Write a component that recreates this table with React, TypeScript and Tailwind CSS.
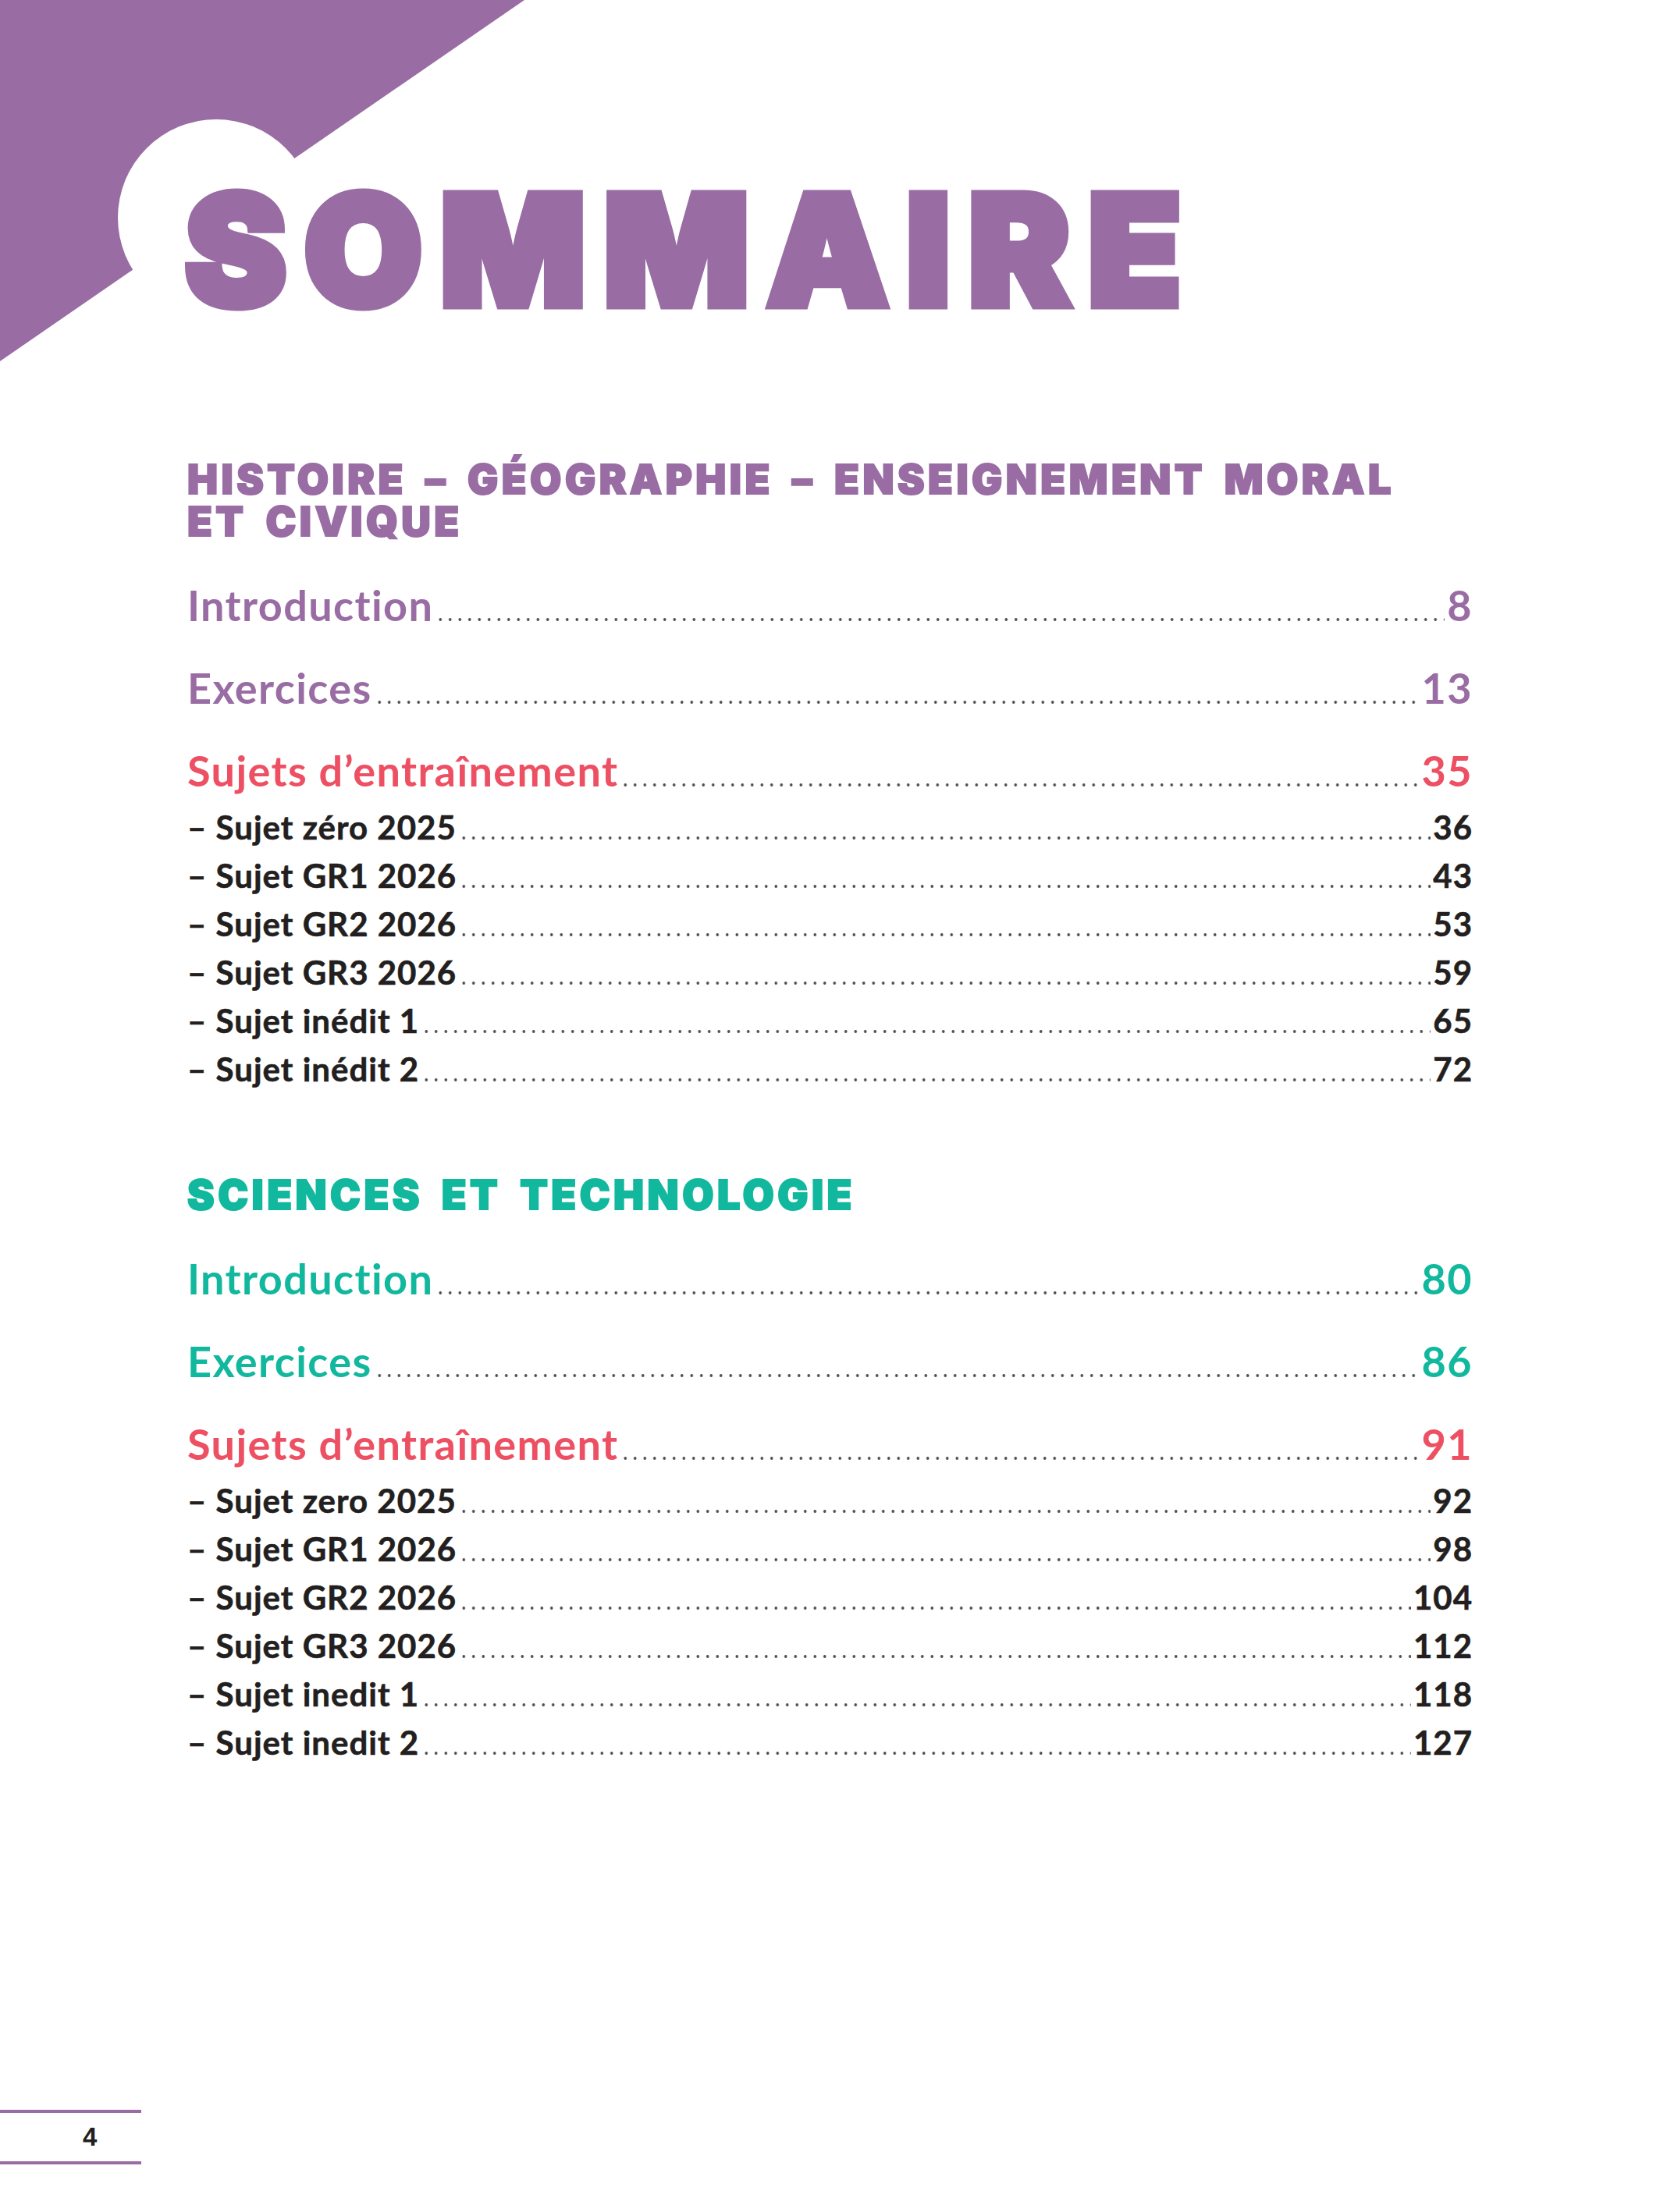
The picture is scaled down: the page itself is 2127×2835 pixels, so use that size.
import React from "react"

type Entry = { label: string; page: string }

interface Section {
  title: React.ReactNode
  titleColor: string
  mainColor: string
  intro: string
  exercices: string
  sujets: string
  subs: Entry[]
}

const sections: Section[] = [
  {
    title: (
      <>
        HISTOIRE – GÉOGRAPHIE – ENSEIGNEMENT MORAL
        <br />
        ET CIVIQUE
      </>
    ),
    titleColor: "text-[#996da4] [-webkit-text-stroke:2px_#996da4]",
    mainColor: "text-[#996da4]",
    intro: "8",
    exercices: "13",
    sujets: "35",
    subs: [
      { label: "– Sujet zéro 2025", page: "36" },
      { label: "– Sujet GR1 2026", page: "43" },
      { label: "– Sujet GR2 2026", page: "53" },
      { label: "– Sujet GR3 2026", page: "59" },
      { label: "– Sujet inédit 1", page: "65" },
      { label: "– Sujet inédit 2", page: "72" },
    ],
  },
  {
    title: <>SCIENCES ET TECHNOLOGIE</>,
    titleColor: "text-[#12b89e] [-webkit-text-stroke:2px_#12b89e]",
    mainColor: "text-[#12b89e]",
    intro: "80",
    exercices: "86",
    sujets: "91",
    subs: [
      { label: "– Sujet zero 2025", page: "92" },
      { label: "– Sujet GR1 2026", page: "98" },
      { label: "– Sujet GR2 2026", page: "104" },
      { label: "– Sujet GR3 2026", page: "112" },
      { label: "– Sujet inedit 1", page: "118" },
      { label: "– Sujet inedit 2", page: "127" },
    ],
  },
]

// ligne pointillée entre le libellé et le numéro de page
function Dots() {
  return (
    <span className="mx-[3px] h-[4px] flex-1 bg-[radial-gradient(circle,#4d4d4f_1.6px,transparent_2.1px)] bg-[length:12.5px_4px] bg-repeat-x" />
  )
}

function MainRow({ label, page, color }: { label: string; page: string; color: string }) {
  return (
    <div className={`flex items-baseline text-[54px] leading-[80px] font-bold tracking-[1.4px] ${color}`}>
      <span>{label}</span>
      <Dots />
      <span>{page}</span>
    </div>
  )
}

function SubRow({ label, page }: Entry) {
  return (
    <div className="flex items-baseline text-[42px] leading-[62px] font-bold tracking-[1px] text-[#231f20] [-webkit-text-stroke:0.6px_#231f20]">
      <span className="whitespace-pre">{label}</span>
      <Dots />
      <span>{page}</span>
    </div>
  )
}

function SectionBlock({ section, first }: { section: Section; first: boolean }) {
  return (
    <section className={first ? "mt-[170px]" : "mt-[104px]"}>
      <h2
        className={`font-['Inter','Lato',sans-serif] text-[52px] leading-[54px] font-black tracking-[4.5px] [word-spacing:9px] ${section.titleColor}`}
      >
        {section.title}
      </h2>
      <div className="mt-[40px] flex flex-col gap-[26px]">
        <MainRow label="Introduction" page={section.intro} color={section.mainColor} />
        <MainRow label="Exercices" page={section.exercices} color={section.mainColor} />
        <div>
          <MainRow label="Sujets d’entraînement" page={section.sujets} color="text-[#ee5063]" />
          <div className="mt-[1px] flex flex-col">
            {section.subs.map((s) => (
              <SubRow key={s.label} label={s.label} page={s.page} />
            ))}
          </div>
        </div>
      </div>
    </section>
  )
}

export default function App() {
  return (
    <div className="relative flex h-[2835px] w-[2127px] flex-col overflow-hidden bg-white font-['Lato','Noto_Sans',sans-serif]">
      {/* triangle décoratif en haut à gauche */}
      <svg className="absolute left-0 top-0" width="680" height="470" viewBox="0 0 680 470">
        <polygon points="0,0 672,0 0,463" fill="#996da4" />
        <circle cx="277" cy="279" r="126" fill="#ffffff" />
      </svg>

      <div className="relative px-[240px] pt-[223px]">
        <h1 className="ml-[-3px] font-['Inter','Lato',sans-serif] text-[195px] leading-[195px] font-black tracking-[23px] text-[#996da4] [-webkit-text-stroke:11px_#996da4]">
          SOMMAIRE
        </h1>
        {sections.map((s, i) => (
          <SectionBlock key={i} section={s} first={i === 0} />
        ))}
      </div>

      <div className="mb-[61px] mt-auto w-[181px] border-y-4 border-[#996da4] py-[14px] pl-[106px] font-['Liberation_Sans',sans-serif] text-[33px] leading-[34px] font-bold text-[#231f20]">
        4
      </div>
    </div>
  )
}
